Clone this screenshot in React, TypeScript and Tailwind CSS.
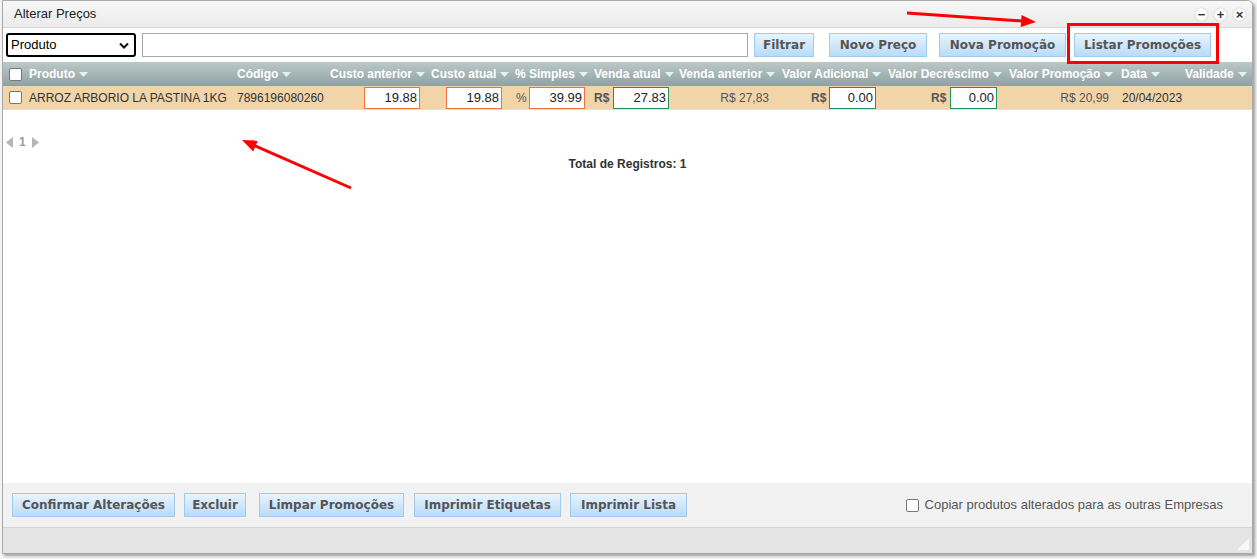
import React from "react";

const arial = "font-['Liberation_Sans',Arial,sans-serif]";
const btnFont = "font-['DejaVu_Sans',Tahoma,sans-serif]";

const btnClass = `inline-flex h-[24px] items-center justify-center whitespace-nowrap border border-[#9fcbef] bg-[linear-gradient(#e9f4fd,#b9dbf7)] px-0 text-[12px] font-bold text-[#555] ${btnFont}`;

const COLS = "grid-cols-[23px_208px_93px_101px_84px_79px_85px_103px_106px_121px_112px_64px_70px]";

const HEADERS = [
  "Produto",
  "Código",
  "Custo anterior",
  "Custo atual",
  "% Simples",
  "Venda atual",
  "Venda anterior",
  "Valor Adicional",
  "Valor Decréscimo",
  "Valor Promoção",
  "Data",
  "Validade"
];

function SortArrow() {
  return (
    <svg className="ml-[4px] shrink-0" width="9" height="5" viewBox="0 0 9 5">
      <path d="M0 0h9L4.5 5z" fill="#dff3f7" />
    </svg>
  );
}

function Check({ className = "" }: { className?: string }) {
  return (
    <span
      className={`inline-block h-[13px] w-[13px] shrink-0 rounded-[2px] border border-[#767676] bg-white ${className}`}
    />
  );
}

function NumInput({ value, color, width = "w-[56px]" }: { value: string; color: string; width?: string }) {
  return (
    <span
      className={`flex h-[22px] ${width} items-center justify-end border bg-white pr-[2px] text-[13px] text-[#222] ${color}`}
    >
      {value}
    </span>
  );
}

const orange = "border-[#f0703f]";
const green = "border-[#23925a]";

function Arrow({
  x1,
  y1,
  x2,
  y2
}: {
  x1: number;
  y1: number;
  x2: number;
  y2: number;
}) {
  const angle = Math.atan2(y2 - y1, x2 - x1);
  const len = 16;
  const spread = 0.38;
  const ax = x2 - len * Math.cos(angle - spread);
  const ay = y2 - len * Math.sin(angle - spread);
  const bx = x2 - len * Math.cos(angle + spread);
  const by = y2 - len * Math.sin(angle + spread);
  const lx = x2 - 12 * Math.cos(angle);
  const ly = y2 - 12 * Math.sin(angle);
  return (
    <g>
      <line x1={x1} y1={y1} x2={lx} y2={ly} stroke="#ff0000" strokeWidth="3" />
      <polygon points={`${x2},${y2} ${ax},${ay} ${bx},${by}`} fill="#ff0000" />
    </g>
  );
}

export default function App() {
  return (
    <div className={`relative h-[559px] w-[1257px] overflow-hidden bg-[#f4f4f4] ${arial}`}>
      <div className="ml-[2px] flex h-[554px] w-[1251px] flex-col overflow-hidden rounded-tr-[6px] border border-[#a9a9a9] bg-white shadow-[2px_2px_3px_rgba(0,0,0,0.35)]">
        {/* title bar */}
        <div className="flex h-[27px] shrink-0 items-center justify-between border-b border-[#d6d6d6] bg-[linear-gradient(#f7f7f7,#ebebeb)] pl-[11px] pr-[6px]">
          <span className="text-[13px] text-[#222]">Alterar Preços</span>
          <div className="flex items-center gap-[6px] pt-[1px]">
            {["−", "+", "×"].map((g) => (
              <span
                key={g}
                className="flex h-[13px] w-[13px] items-center justify-center rounded-full bg-white text-[13px] font-bold leading-none text-[#333] shadow-[0_0_1px_rgba(0,0,0,0.4)]"
              >
                {g}
              </span>
            ))}
          </div>
        </div>

        {/* toolbar */}
        <div className="flex h-[34px] shrink-0 items-center pl-[3px]">
          <div className="flex h-[24px] w-[130px] items-center justify-between rounded-[3px] border-2 border-black bg-white pl-[3px] pr-[5px] text-[13px] text-black">
            <span>Produto</span>
            <svg width="10" height="7" viewBox="0 0 10 7">
              <path d="M1 1.5l4 4 4-4" fill="none" stroke="#111" strokeWidth="2" />
            </svg>
          </div>
          <div className="ml-[6px] h-[24px] w-[606px] border border-[#a6a6a6] bg-white" />
          <button className={`${btnClass} ml-[6px] w-[60px]`}>Filtrar</button>
          <button className={`${btnClass} ml-[15px] w-[98px]`}>Novo Preço</button>
          <button className={`${btnClass} ml-[12px] w-[127px]`}>Nova Promoção</button>
          <button className={`${btnClass} ml-[8px] w-[137px]`}>Listar Promoções</button>
        </div>

        {/* header row */}
        <div
          className={`grid h-[24px] shrink-0 ${COLS} items-center bg-[linear-gradient(#bcc8c8,#8fa1a2)] text-[12px] font-bold text-white`}
        >
          <div className="flex pl-[6px]">
            <Check />
          </div>
          {HEADERS.map((h) => (
            <div key={h} className="flex items-center whitespace-nowrap pl-[3px]">
              {h}
              <SortArrow />
            </div>
          ))}
        </div>

        {/* data row */}
        <div
          className={`grid h-[24px] shrink-0 ${COLS} items-center border-b border-[#e0e0e0] bg-[#f2d4a9] text-[12px] text-[#333]`}
        >
          <div className="flex pl-[6px]">
            <Check />
          </div>
          <div className="whitespace-nowrap pl-[3px]">ARROZ ARBORIO LA PASTINA 1KG</div>
          <div className="pl-[3px]">7896196080260</div>
          <div className="flex pl-[37px]">
            <NumInput value="19.88" color={orange} />
          </div>
          <div className="flex pl-[18px]">
            <NumInput value="19.88" color={orange} />
          </div>
          <div className="flex items-center pl-[4px]">
            <span className="w-[13px] text-[#555]">%</span>
            <NumInput value="39.99" color={orange} />
          </div>
          <div className="flex items-center pl-[3px]">
            <span className="w-[19px] font-bold text-[#555]">R$</span>
            <NumInput value="27.83" color={green} />
          </div>
          <div className="pr-[10px] text-right text-[#555]">R$ 27,83</div>
          <div className="flex items-center pl-[32px]">
            <span className="w-[18px] font-bold text-[#555]">R$</span>
            <NumInput value="0.00" color={green} width="w-[47px]" />
          </div>
          <div className="flex items-center pl-[46px]">
            <span className="w-[19px] font-bold text-[#555]">R$</span>
            <NumInput value="0.00" color={green} width="w-[47px]" />
          </div>
          <div className="pr-[9px] text-right text-[#555]">R$ 20,99</div>
          <div className="whitespace-nowrap pl-[4px]">20/04/2023</div>
          <div />
        </div>

        {/* body */}
        <div className="flex flex-1 flex-col">
          <div className="mt-[23px] flex items-center gap-[6px] pl-[3px] text-[12px] font-bold text-[#9a9a9a]">
            <svg width="7" height="11" viewBox="0 0 7 11">
              <path d="M7 0v11L0 5.5z" fill="#b5b5b5" />
            </svg>
            <span>1</span>
            <svg width="7" height="11" viewBox="0 0 7 11">
              <path d="M0 0v11l7-5.5z" fill="#b5b5b5" />
            </svg>
          </div>
          <div className="mt-[4px] text-center text-[12px] font-bold text-[#333]">Total de Registros: 1</div>
        </div>

        {/* footer */}
        <div className="flex h-[44px] shrink-0 items-center bg-[#f2f2f2] pl-[9px] pr-[29px]">
          <div className="flex items-center">
            <button className={`${btnClass} w-[163px]`}>Confirmar Alterações</button>
            <button className={`${btnClass} ml-[9px] w-[62px]`}>Excluir</button>
            <button className={`${btnClass} ml-[13px] w-[145px]`}>Limpar Promoções</button>
            <button className={`${btnClass} ml-[10px] w-[147px]`}>Imprimir Etiquetas</button>
            <button className={`${btnClass} ml-[9px] w-[117px]`}>Imprimir Lista</button>
          </div>
          <div className="ml-auto flex items-center gap-[6px] text-[13px] text-[#555]">
            <Check />
            <span>Copiar produtos alterados para as outras Empresas</span>
          </div>
        </div>

        {/* status bar */}
        <div className="flex h-[26px] shrink-0 items-end justify-end border-t border-[#d4d4d4] bg-[#e4e4e4] pb-[3px] pr-[3px]">
          <svg width="12" height="12" viewBox="0 0 12 12">
            <path d="M12 0v12H0z" fill="#f8f8f8" />
          </svg>
        </div>
      </div>

      {/* annotations */}
      <div className="absolute left-[1067px] top-[23px] h-[41px] w-[152px] border-[3px] border-[#ff0000]" />
      <svg className="absolute left-0 top-0" width="1257" height="559" viewBox="0 0 1257 559">
        <Arrow x1={907} y1={13} x2={1036} y2={22} />
        <Arrow x1={351} y1={188} x2={242} y2={140} />
      </svg>
    </div>
  );
}
